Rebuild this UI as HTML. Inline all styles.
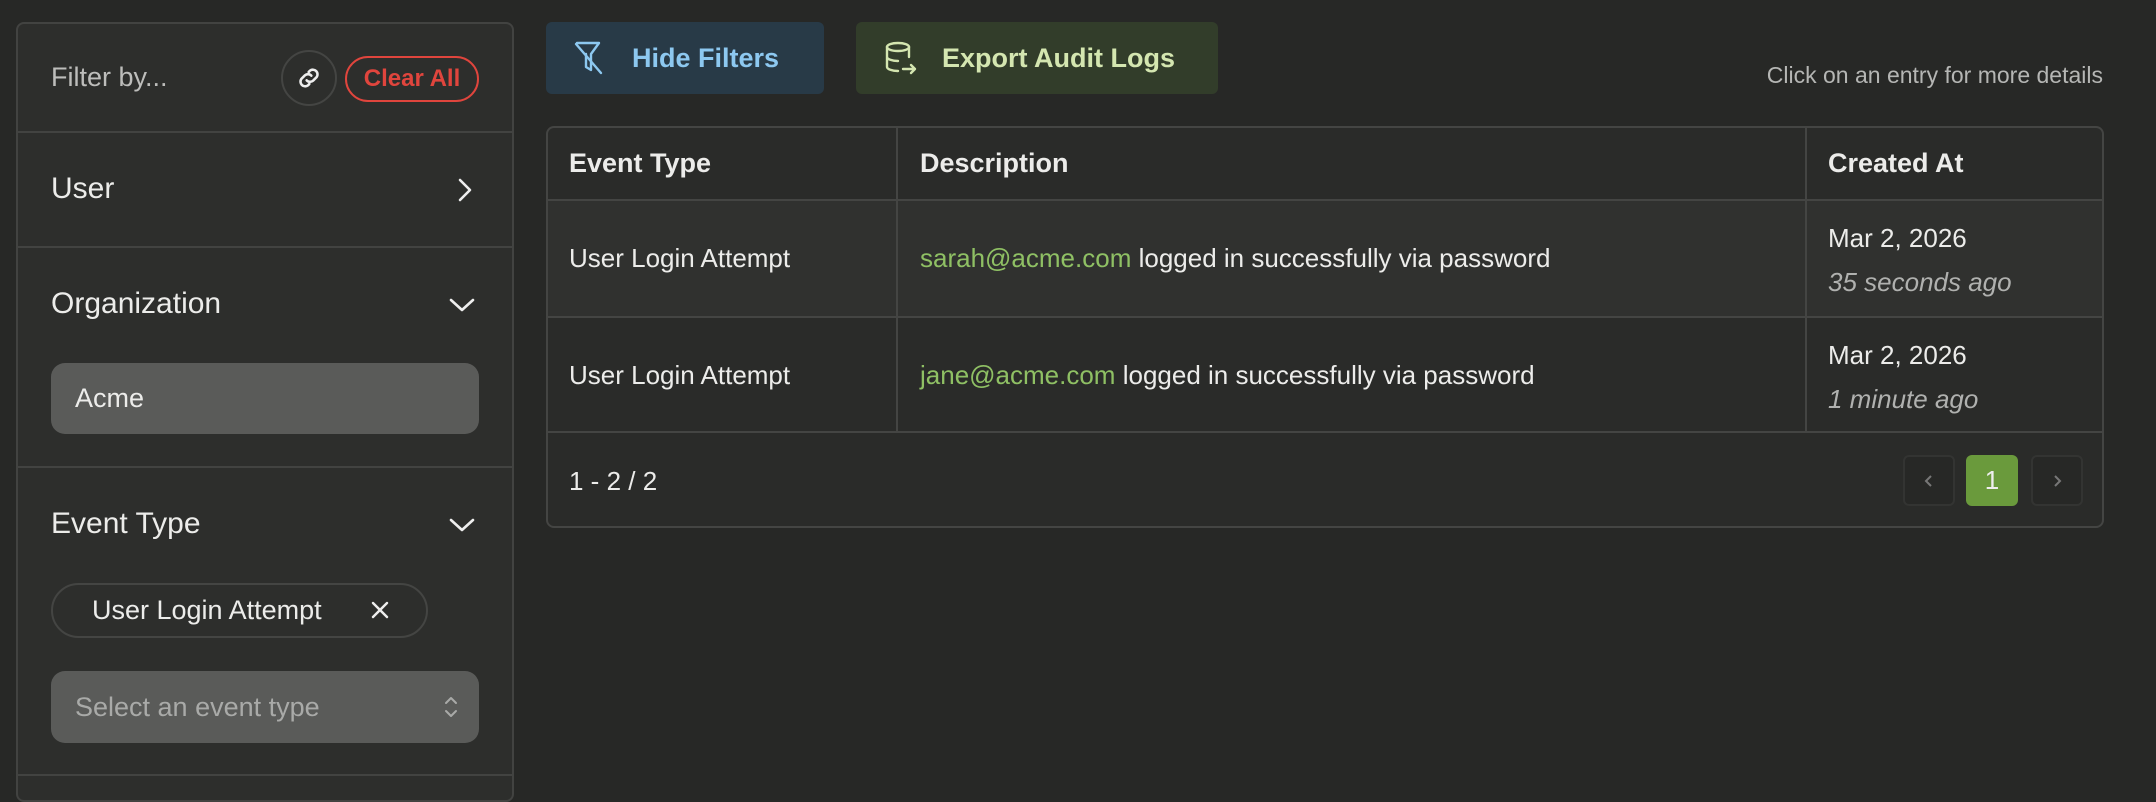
<!DOCTYPE html>
<html><head><meta charset="utf-8"><style>
*{box-sizing:border-box;margin:0;padding:0}
body{width:2156px;height:776px;background:#272826;font-family:"Liberation Sans",sans-serif;color:#ececea;position:relative;overflow:hidden}
.a{position:absolute}
.side{left:16px;top:22px;width:498px;height:780px;background:#2d2e2c;border:2px solid #424341;border-radius:8px}
.hr{position:absolute;left:0;right:0;height:2px;background:#424341}
.t{position:absolute;white-space:nowrap;line-height:1}
.tbl{left:546px;top:126px;width:1558px;height:402px;border:2px solid #444543;border-radius:8px;overflow:hidden;background:#2a2b29}
</style></head><body>
<div class="a side">
  <div class="t" style="left:33px;top:40px;font-size:27px;color:#bdbdbb">Filter by...</div>
  <div class="a" style="left:263px;top:26px;width:56px;height:56px;border:2px solid #444543;border-radius:50%"></div>
  <svg class="a" style="left:277px;top:40px" width="28" height="28" viewBox="0 0 24 24" fill="none" stroke="#eee" stroke-width="2.2" stroke-linecap="round"><path d="M10 14a4 4 0 0 0 5.5.3l3-3a4 4 0 0 0-5.6-5.6l-1.2 1.2"/><path d="M14 10a4 4 0 0 0-5.5-.3l-3 3a4 4 0 0 0 5.6 5.6l1.2-1.2"/></svg>
  <div class="a" style="left:327px;top:32px;width:134px;height:46px;border:2px solid #e0453d;border-radius:24px;color:#e0453d;font-size:24px;font-weight:bold;text-align:center;line-height:42px">Clear All</div>
  <div class="hr" style="top:107px"></div>
  <div class="t" style="left:33px;top:150px;font-size:30px">User</div>
  <svg class="a" style="left:436px;top:153px" width="22" height="26" viewBox="0 0 22 26" fill="none" stroke="#eee" stroke-width="2.6" stroke-linecap="round" stroke-linejoin="round"><path d="M6 3l10 10-10 10"/></svg>
  <div class="hr" style="top:222px"></div>
  <div class="t" style="left:33px;top:265px;font-size:30px">Organization</div>
  <svg class="a" style="left:430px;top:272px" width="28" height="18" viewBox="0 0 28 18" fill="none" stroke="#eee" stroke-width="2.6" stroke-linecap="round" stroke-linejoin="round"><path d="M3 4l11 10 11-10"/></svg>
  <div class="a" style="left:33px;top:339px;width:428px;height:71px;background:#5a5b59;border-radius:14px"></div>
  <div class="t" style="left:57px;top:361px;font-size:27px">Acme</div>
  <div class="hr" style="top:442px"></div>
  <div class="t" style="left:33px;top:485px;font-size:30px">Event Type</div>
  <svg class="a" style="left:430px;top:492px" width="28" height="18" viewBox="0 0 28 18" fill="none" stroke="#eee" stroke-width="2.6" stroke-linecap="round" stroke-linejoin="round"><path d="M3 4l11 10 11-10"/></svg>
  <div class="a" style="left:33px;top:559px;width:377px;height:55px;border:2px solid #444543;border-radius:28px"></div>
  <div class="t" style="left:74px;top:573px;font-size:27px">User Login Attempt</div>
  <svg class="a" style="left:352px;top:576px" width="20" height="20" viewBox="0 0 20 20" stroke="#eee" stroke-width="2.4" stroke-linecap="round"><path d="M3 3l14 14M17 3L3 17"/></svg>
  <div class="a" style="left:33px;top:647px;width:428px;height:72px;background:#5a5b59;border-radius:14px"></div>
  <div class="t" style="left:57px;top:670px;font-size:27px;color:#a9aaa8">Select an event type</div>
  <svg class="a" style="left:425px;top:669px" width="16" height="28" viewBox="0 0 16 28" fill="none" stroke="#a9aaa8" stroke-width="2" stroke-linecap="round" stroke-linejoin="round"><path d="M3 10l5-5 5 5M3 18l5 5 5-5"/></svg>
  <div class="hr" style="top:750px"></div>
</div>

<div class="a" style="left:546px;top:22px;width:278px;height:72px;background:#283a47;border-radius:6px"></div>
<svg class="a" style="left:573px;top:40px" width="32" height="36" viewBox="0 0 32 36" fill="none" stroke="#8dc8f0" stroke-width="2.4" stroke-linecap="round" stroke-linejoin="round"><path d="M4 3h22l-8 11v16l-5-3V14"/><path d="M3 4l25 29"/></svg>
<div class="t" style="left:632px;top:45px;font-size:27px;font-weight:bold;color:#8dc8f0">Hide Filters</div>
<div class="a" style="left:856px;top:22px;width:362px;height:72px;background:#323d2a;border-radius:6px"></div>
<svg class="a" style="left:884px;top:40px" width="36" height="36" viewBox="0 0 36 36" fill="none" stroke="#d4e6b0" stroke-width="2.4" stroke-linecap="round" stroke-linejoin="round"><ellipse cx="14" cy="7" rx="11" ry="4"/><path d="M3 7v20c0 2 5 4 11 4M25 7v10M3 17c0 2 5 4 11 4"/><path d="M19 29h12M27 25l4 4-4 4"/></svg>
<div class="t" style="left:942px;top:45px;font-size:27px;font-weight:bold;color:#d4e6b0">Export Audit Logs</div>
<div class="t" style="right:53px;top:64px;font-size:23px;color:#b5b6b4">Click on an entry for more details</div>

<div class="a tbl">
  <div class="a" style="left:0;top:73px;right:0;height:115px;background:#30312f"></div>
  <div class="hr" style="top:71px;background:#444543"></div>
  <div class="hr" style="top:188px;background:#444543"></div>
  <div class="hr" style="top:303px;background:#444543"></div>
  <div class="a" style="left:348px;top:0;width:2px;height:303px;background:#444543"></div>
  <div class="a" style="left:1257px;top:0;width:2px;height:303px;background:#444543"></div>
  <div class="t" style="left:21px;top:22px;font-size:27px;font-weight:bold">Event Type</div>
  <div class="t" style="left:372px;top:22px;font-size:27px;font-weight:bold">Description</div>
  <div class="t" style="left:1280px;top:22px;font-size:27px;font-weight:bold">Created At</div>
  <div class="t" style="left:21px;top:117px;font-size:26px">User Login Attempt</div>
  <div class="t" style="left:372px;top:117px;font-size:26px"><span style="color:#8fc064">sarah@acme.com</span> logged in successfully via password</div>
  <div class="t" style="left:1280px;top:97px;font-size:26px">Mar 2, 2026</div>
  <div class="t" style="left:1280px;top:141px;font-size:26px;font-style:italic;color:#b0b1af">35 seconds ago</div>
  <div class="t" style="left:21px;top:234px;font-size:26px">User Login Attempt</div>
  <div class="t" style="left:372px;top:234px;font-size:26px"><span style="color:#8fc064">jane@acme.com</span> logged in successfully via password</div>
  <div class="t" style="left:1280px;top:214px;font-size:26px">Mar 2, 2026</div>
  <div class="t" style="left:1280px;top:258px;font-size:26px;font-style:italic;color:#b0b1af">1 minute ago</div>
  <div class="t" style="left:21px;top:340px;font-size:26px">1 - 2 / 2</div>
  <div class="a" style="left:1355px;top:327px;width:52px;height:51px;border:2px solid #333432;border-radius:6px;background:#272826"></div>
  <svg class="a" style="left:1374px;top:345px" width="14" height="16" viewBox="0 0 14 16" fill="none" stroke="#777" stroke-width="2"><path d="M9 3L4 8l5 5"/></svg>
  <div class="a" style="left:1418px;top:327px;width:52px;height:51px;background:#6a9a3c;border-radius:6px;color:#eee;font-size:26px;text-align:center;line-height:51px">1</div>
  <div class="a" style="left:1483px;top:327px;width:52px;height:51px;border:2px solid #333432;border-radius:6px;background:#272826"></div>
  <svg class="a" style="left:1502px;top:345px" width="14" height="16" viewBox="0 0 14 16" fill="none" stroke="#777" stroke-width="2"><path d="M5 3l5 5-5 5"/></svg>
</div>
</body></html>
